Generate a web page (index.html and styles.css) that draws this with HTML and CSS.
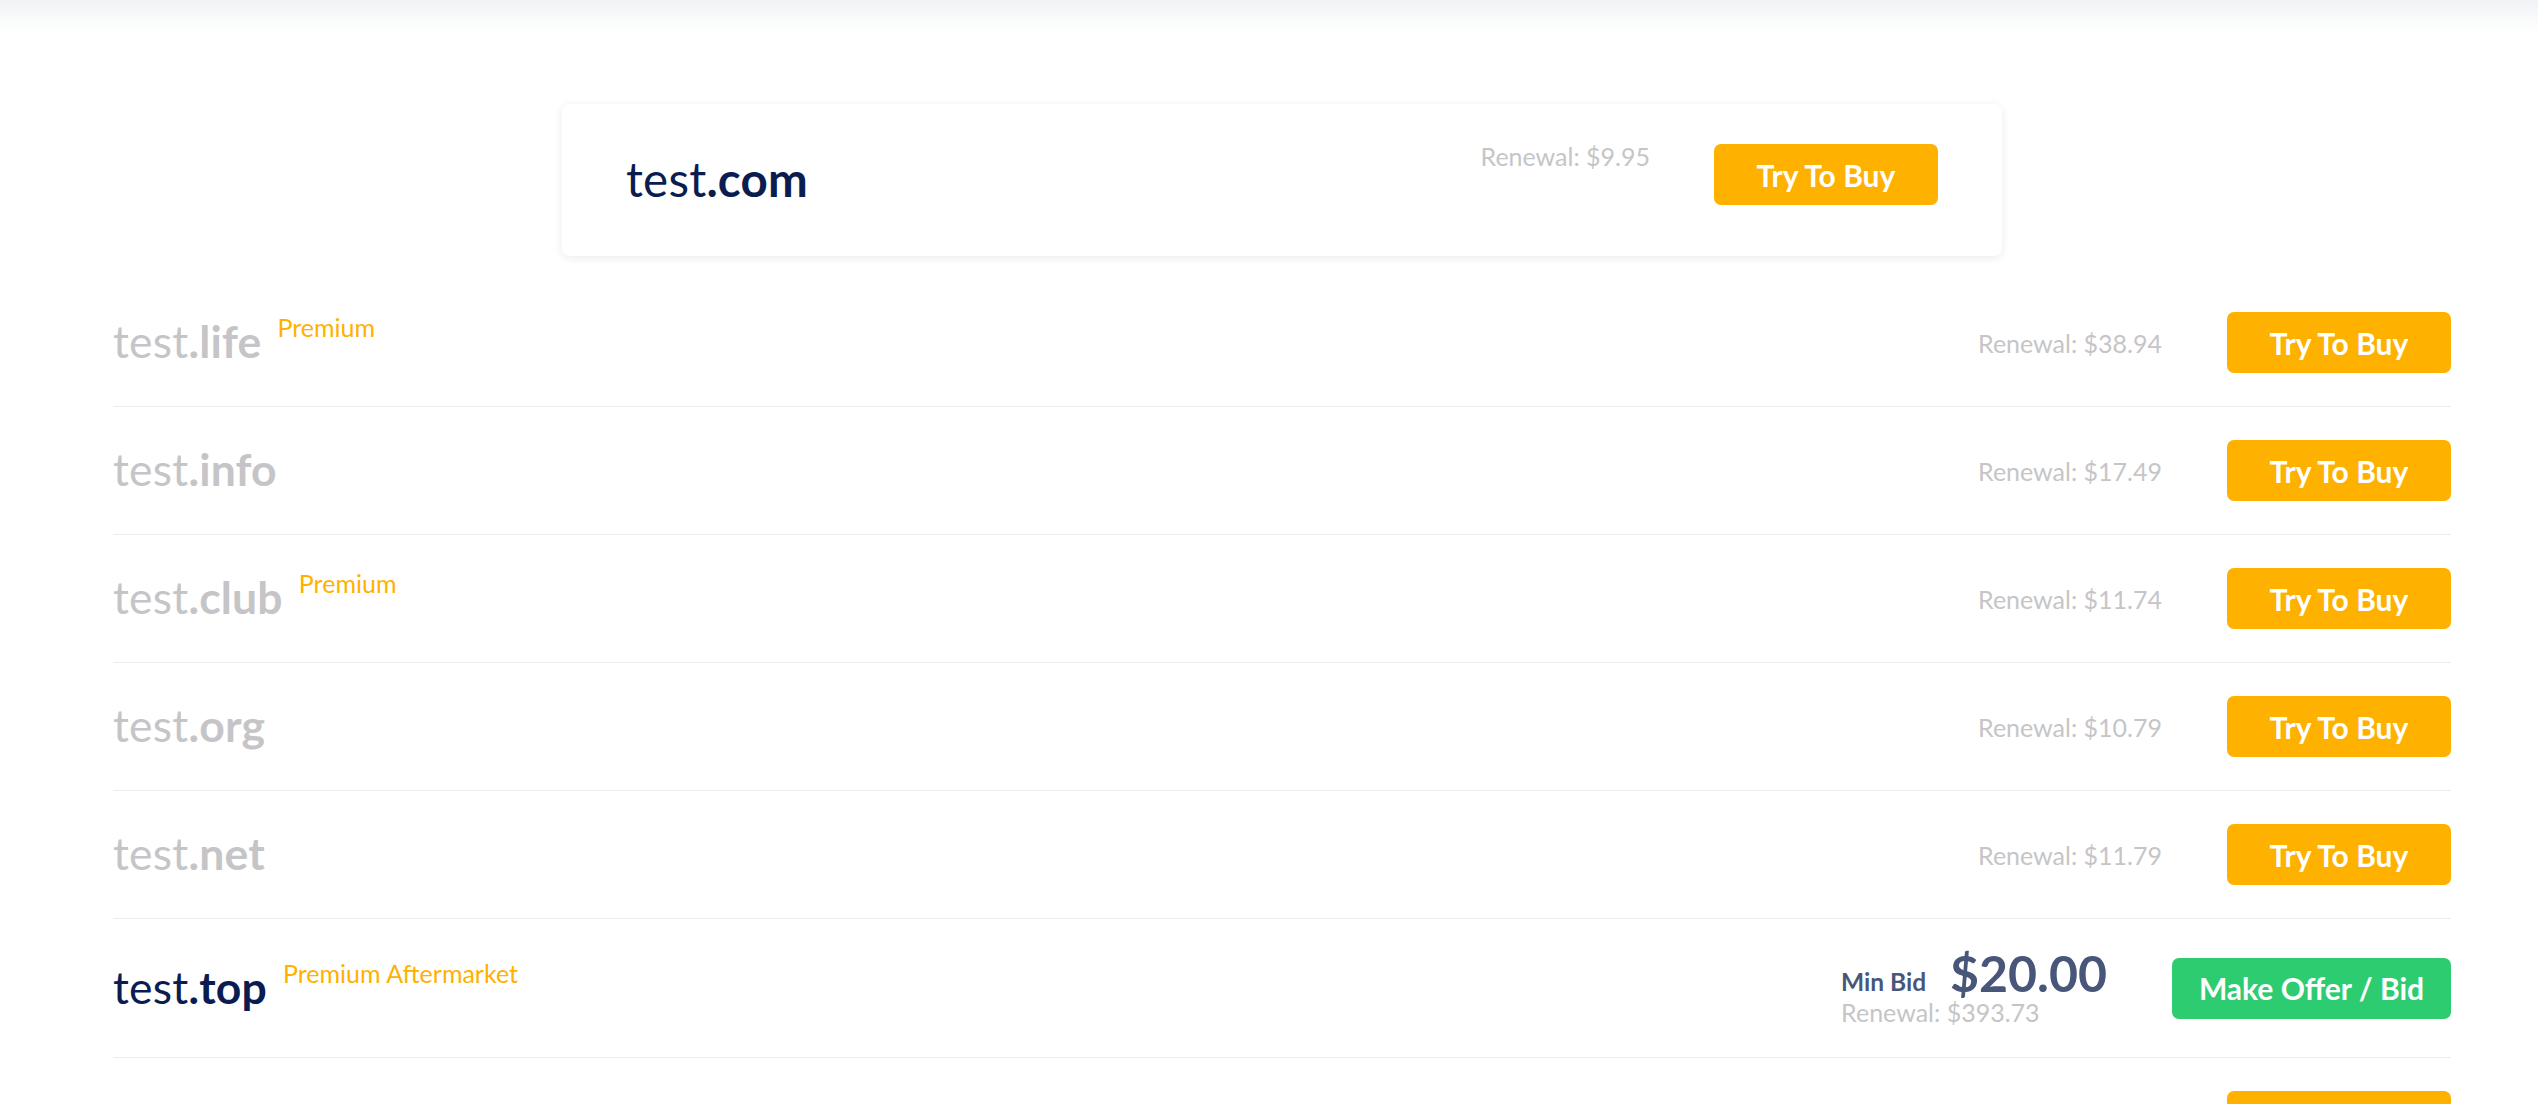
FILE: index.html
```html
<!DOCTYPE html>
<html lang="en">
<head>
<meta charset="utf-8">
<title>Domain search</title>
<link rel="stylesheet" href="styles.css">
</head>
<body>
<div class="top-fade"></div>
<main class="results">
  <section class="featured">
    <div class="domain domain--featured"><span class="sld">test</span><span class="tld">.com</span></div>
    <div class="featured-side">
      <span class="renewal">Renewal: $9.95</span>
      <button class="btn btn--buy">Try To Buy</button>
    </div>
  </section>

  <ul class="list">
    <li class="row">
      <div class="name"><span class="domain domain--muted"><span class="sld">test</span><span class="tld">.life</span></span><span class="tag">Premium</span></div>
      <div class="side"><span class="renewal">Renewal: $38.94</span><button class="btn btn--buy">Try To Buy</button></div>
    </li>
    <li class="row">
      <div class="name"><span class="domain domain--muted"><span class="sld">test</span><span class="tld">.info</span></span></div>
      <div class="side"><span class="renewal">Renewal: $17.49</span><button class="btn btn--buy">Try To Buy</button></div>
    </li>
    <li class="row">
      <div class="name"><span class="domain domain--muted"><span class="sld">test</span><span class="tld">.club</span></span><span class="tag">Premium</span></div>
      <div class="side"><span class="renewal">Renewal: $11.74</span><button class="btn btn--buy">Try To Buy</button></div>
    </li>
    <li class="row">
      <div class="name"><span class="domain domain--muted"><span class="sld">test</span><span class="tld">.org</span></span></div>
      <div class="side"><span class="renewal">Renewal: $10.79</span><button class="btn btn--buy">Try To Buy</button></div>
    </li>
    <li class="row">
      <div class="name"><span class="domain domain--muted"><span class="sld">test</span><span class="tld">.net</span></span></div>
      <div class="side"><span class="renewal">Renewal: $11.79</span><button class="btn btn--buy">Try To Buy</button></div>
    </li>
    <li class="row row--auction">
      <div class="name"><span class="domain domain--dark"><span class="sld">test</span><span class="tld">.top</span></span><span class="tag">Premium Aftermarket</span></div>
      <div class="side">
        <div class="bid">
          <div class="bid-line"><span class="bid-label">Min Bid</span><span class="bid-price">$20.00</span></div>
          <span class="renewal renewal--under">Renewal: $393.73</span>
        </div>
        <button class="btn btn--offer">Make Offer / Bid</button>
      </div>
    </li>
    <li class="row">
      <div class="name"><span class="domain domain--muted"><span class="sld">test</span><span class="tld">.xyz</span></span></div>
      <div class="side"><span class="renewal">Renewal: $12.99</span><button class="btn btn--buy">Try To Buy</button></div>
    </li>
  </ul>
</main>
</body>
</html>
```

FILE: styles.css
```css
* { box-sizing: border-box; }

html, body {
  margin: 0;
  padding: 0;
  background: #ffffff;
  overflow: hidden;
  height: 1104px;
}

body {
  font-family: "Lato", "Open Sans", sans-serif;
  color: #0b1f51;
}

.top-fade {
  height: 34px;
  background: linear-gradient(to bottom, #f1f2f6 0%, #f8f9fa 45%, #ffffff 100%);
}

.results {
  width: 2338px;
  margin-left: 113px;
  padding-top: 70px;
}

/* featured card */
.featured {
  width: 1440px;
  height: 152px;
  margin-left: 449px;
  background: #fff;
  border-radius: 8px;
  box-shadow: 0 2px 10px rgba(20, 30, 60, 0.09);
  display: flex;
  align-items: center;
  justify-content: space-between;
  padding: 0 64px;
}

.featured-side {
  display: flex;
  align-items: flex-start;
  gap: 64px;
  align-self: flex-start;
  padding-top: 40px;
}

.featured-side .renewal {
  margin-top: -3px;
}

/* domain names */
.domain {
  font-size: 44.5px;
  line-height: 1;
  letter-spacing: 0.2px;
  white-space: nowrap;
}
.domain .sld { font-weight: 400; }
.domain .tld { font-weight: 700; }

.domain--featured { color: #0b1d50; font-size: 47.5px; margin-top: -2px; }
.domain--muted { color: #c5c5c7; }
.domain--dark { color: #0b1d50; }

/* list */
.list {
  list-style: none;
  margin: 23px 0 0;
  padding: 0;
}

.row {
  height: 128px;
  border-bottom: 1.5px solid #ececec;
  display: flex;
  align-items: center;
  justify-content: space-between;
}

.row--auction {
  height: 139px;
}

.name {
  display: flex;
  align-items: flex-start;
  gap: 16px;
  padding-top: 2px;
  padding-bottom: 8px;
}

.name .domain { padding-top: 4px; }

.tag {
  font-size: 25px;
  line-height: 1;
  color: #ffb100;
  white-space: nowrap;
}

.side {
  display: flex;
  align-items: center;
  gap: 65px;
}

.renewal {
  font-size: 25px;
  line-height: 30px;
  color: #c5c5c7;
  white-space: nowrap;
}

.btn {
  border: 0;
  border-radius: 7px;
  height: 61px;
  width: 224px;
  font-family: inherit;
  font-size: 30px;
  font-weight: 700;
  color: #fff;
  cursor: pointer;
  padding: 0;
}

.btn--buy { background: #ffb100; }
.btn--offer { background: #2ecc71; width: 279px; }

/* auction block */
.bid {
  display: flex;
  flex-direction: column;
  align-items: flex-start;
  margin-top: -4px;
}

.bid-line {
  display: flex;
  align-items: baseline;
  gap: 24px;
  line-height: 44px;
}

.bid-label {
  font-size: 24.5px;
  font-weight: 700;
  color: #485779;
  position: relative;
  top: 3px;
}

.bid-price {
  font-size: 50px;
  font-weight: 700;
  line-height: 44px;
  color: #485779;
  position: relative;
  top: 4px;
}

.renewal--under {
  margin-top: -3px;
  line-height: 28px;
}
```
